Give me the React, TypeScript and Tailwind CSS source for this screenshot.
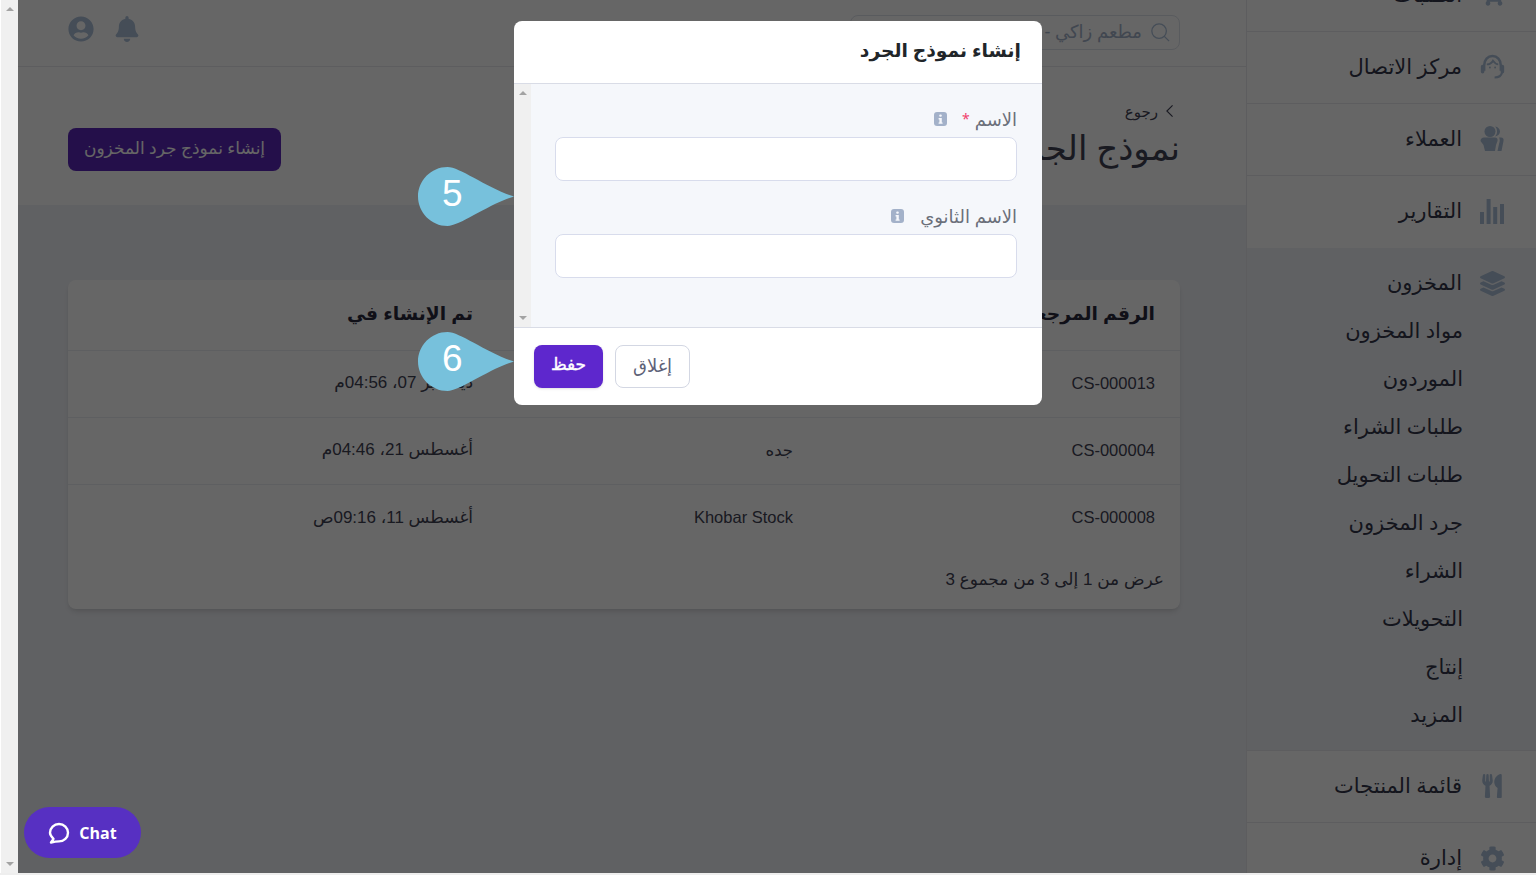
import React from 'react'
import { FaBell, FaCog, FaLayerGroup, FaShoppingCart, FaUserCircle, FaUtensils } from 'react-icons/fa'

const HeadsetIcon = () => (
  <svg viewBox="0 0 24 24" className="w-[25px] h-[25px]" fill="none" stroke="#acc0d9" strokeWidth="2.4">
    <path d="M4 16 V11 C4 5.5 7.5 2 12 2 C16.5 2 20 5.5 20 11 V16" />
    <path d="M6.5 10 C9.5 10 11.5 8.5 12.5 6.5 C14 8.5 15.5 10 17.5 10" strokeWidth="1.8" />
    <path d="M2.5 12 V17 M21.5 12 V17" strokeWidth="3.4" strokeLinecap="round" />
    <path d="M21 18 C20.5 21 18 22.5 14 22.5" strokeWidth="2" />
    <circle cx="9.5" cy="13" r="0.9" fill="#acc0d9" stroke="none" />
    <circle cx="14.5" cy="13" r="0.9" fill="#acc0d9" stroke="none" />
  </svg>
)

const UsersIcon = () => (
  <svg viewBox="0 0 24 25" className="w-[24px] h-[25px]" fill="#acc0d9">
    <circle cx="10" cy="5.5" r="5.5" />
    <path d="M15 0.6 C18 1 20 3 20 5.5 C20 8 18 10 15 10.4 C16.5 9 17 7.5 17 5.5 C17 3.5 16.5 2 15 0.6 Z" />
    <path d="M0.5 15 C0.5 13 2 11.5 4 11.5 H15 C17 11.5 18 13 17.5 15 L16 19 L15 25 H5 L3.5 19 Z" />
    <path d="M19 11.5 H21 C23 11.5 24 13 23.5 15 L21.5 25 H17.5 L19 18 C20 15 20 13 19 11.5 Z" />
  </svg>
)

const BarsIcon = () => (
  <svg viewBox="0 0 24 25" className="w-[24px] h-[25px]" fill="#acc0d9">
    <rect x="0" y="13" width="4" height="12" />
    <rect x="6.6" y="0" width="4" height="25" />
    <rect x="13.2" y="8" width="4" height="17" />
    <rect x="20" y="5" width="4" height="20" />
  </svg>
)

const InfoBadge = () => (
  <span className="inline-flex w-[13px] h-[14px] rounded-[3px] bg-[#a3b1c9] items-center justify-center">
    <svg viewBox="0 0 13 14" className="w-[13px] h-[14px]" fill="#f5f7fb">
      <rect x="5.2" y="2.4" width="2.6" height="2.4" rx="1" />
      <path d="M4.6 6 H7.8 V10.4 H8.6 V11.8 H4.6 V10.4 H5.4 V7.4 H4.6 Z" />
    </svg>
  </span>
)

const Callout = ({ n, className }: { n: string; className: string }) => (
  <div className={`absolute w-[96px] h-[59px] ${className}`}>
    <svg viewBox="0 0 96 60" preserveAspectRatio="none" className="absolute inset-0 w-[96px] h-[59px]" fill="#77c1dc">
      <path d="M29.5 0 C42 0 70 22 96 30 C70 38 42 60 29.5 60 C13 60 0 46 0 30 C0 14 13 0 29.5 0 Z" />
    </svg>
    <span className="absolute left-[24px] top-[5px] text-[37px] leading-[44px] text-white font-['Liberation_Sans',sans-serif]">{n}</span>
  </div>
)

const NavRow = ({ icon, label, border = true }: { icon: React.ReactNode; label: string; border?: boolean }) => (
  <div className={`h-[72px] flex items-center pr-[31px] pb-[2px] ${border ? 'border-b border-[#e8e9ee]' : ''}`}>
    <span className="w-[26px] flex justify-center text-[#acc0d9]">{icon}</span>
    <span className="mr-[17px] text-[21px] text-[#33364a]">{label}</span>
  </div>
)

const stockItems = ['مواد المخزون', 'الموردون', 'طلبات الشراء', 'طلبات التحويل', 'جرد المخزون', 'الشراء', 'التحويلات', 'إنتاج', 'المزيد']

const rows = [
  { ref: 'CS-000013', place: 'جده', date: 'ديسمبر 07، 04:56م' },
  { ref: 'CS-000004', place: 'جده', date: 'أغسطس 21، 04:46م' },
  { ref: 'CS-000008', place: 'Khobar Stock', date: 'أغسطس 11، 09:16ص' },
]

const Scrollbar = ({ className }: { className: string }) => (
  <div className={`flex flex-col justify-between items-center bg-[#f0f0f0] ${className}`}>
    <span className="mt-[7px] w-0 h-0 border-x-[4px] border-x-transparent border-b-[4px] border-b-[#a3a3a3]" />
    <span className="mb-[7px] w-0 h-0 border-x-[4px] border-x-transparent border-t-[4px] border-t-[#a3a3a3]" />
  </div>
)

export default function App() {
  return (
    <div dir="rtl" className="relative w-[1536px] h-[875px] overflow-hidden flex bg-white font-['Noto_Sans','DejaVu_Sans',sans-serif]">
      {/* sidebar */}
      <aside className="w-[290px] shrink-0 bg-white border-l border-[#e8e9ee] overflow-hidden">
        <div className="-mt-[40px]">
          <NavRow icon={<FaShoppingCart size={24} />} label="الطلبات" />
          <NavRow icon={<HeadsetIcon />} label="مركز الاتصال" />
          <NavRow icon={<UsersIcon />} label="العملاء" />
          <NavRow icon={<BarsIcon />} label="التقارير" border={false} />
          <div className="bg-[#f1f3f8] border-b border-[#e8e9ee] pb-[11px]">
            <div className="h-[70px] flex items-center pr-[31px]">
              <span className="w-[26px] flex justify-center text-[#acc0d9]"><FaLayerGroup size={25} /></span>
              <span className="mr-[17px] text-[21px] text-[#33364a]">المخزون</span>
            </div>
            <div className="-mt-[11px]">
              {stockItems.map((item) => (
                <div key={item} className="h-[48px] flex items-center pr-[73px] text-[21px] text-[#33364a]">{item}</div>
              ))}
            </div>
          </div>
          <NavRow icon={<FaUtensils size={24} />} label="قائمة المنتجات" />
          <NavRow icon={<FaCog size={25} />} label="إدارة" border={false} />
        </div>
      </aside>

      {/* main */}
      <main className="flex-1 flex flex-col bg-[#f1f3f8]">
        <header className="h-[67px] bg-white border-b border-[#e8e9ee] flex items-center justify-between pr-[66px] pl-[50px] shrink-0">
          <div className="w-[330px] h-[35px] border border-[#dfe3ec] rounded-[8px] flex items-center pr-[9px] gap-[8px] mb-[2px]">
            <svg viewBox="0 0 22 22" className="w-[20px] h-[20px]" fill="none" stroke="#acc0d9" strokeWidth="1.4">
              <circle cx="10" cy="10" r="8" />
              <path d="M15.5 15.5 L21 21" />
            </svg>
            <span className="text-[18px] text-[#a3b1c9] whitespace-nowrap pb-[2px]">مطعم زاكي - الفرع الرئيسي</span>
          </div>
          <div className="flex items-center gap-[20px] mb-[8px] text-[#acc0d9]">
            <FaBell size={26} />
            <FaUserCircle size={26} />
          </div>
        </header>

        <section className="h-[138px] bg-white flex items-center justify-between pr-[66px] pl-[50px] shrink-0">
          <div className="pb-[4px]">
            <div className="flex items-center gap-[7px] pr-[6px] text-[15px] text-[#3f4254] leading-[20px] mt-[2px]">
              <svg viewBox="0 0 10 16" className="w-[9px] h-[14px]" fill="none" stroke="#3f4254" strokeWidth="1.3">
                <path d="M8.5 1.5 L2 8 L8.5 14.5" />
              </svg>
              رجوع
            </div>
            <h1 className="text-[34px] leading-[44px] text-[#3f4254] mt-[4px]">نموذج الجرد</h1>
          </div>
          <button className="w-[213px] h-[43px] mt-[26px] rounded-[8px] bg-[#5b27b8] text-white text-[17px] pb-[2px]">إنشاء نموذج جرد المخزون</button>
        </section>

        <div className="mx-[50px] mr-[66px] mt-[75px] h-[329px] bg-white rounded-[8px] shadow-md font-['Liberation_Sans','DejaVu_Sans',sans-serif] text-[16.5px] text-[#3f4254]">
          <div className="h-[71px] grid grid-cols-[362px_320px_1fr] pr-[25px] pb-[2px] items-center border-b border-[#ebedf3] font-bold text-[18.7px] text-[#2a2a3c]">
            <span>الرقم المرجعي</span>
            <span>الفرع</span>
            <span>تم الإنشاء في</span>
          </div>
          {rows.map((row, i) => (
            <div key={row.ref} className={`h-[67px] grid grid-cols-[362px_320px_1fr] pr-[25px] pb-[2px] items-center ${i < rows.length - 1 ? 'border-b border-[#ebedf3]' : ''}`}>
              <span dir="ltr" className="text-right">{row.ref}</span>
              <span>{row.place}</span>
              <span className="text-[17px]">{row.date}</span>
            </div>
          ))}
          <div className="pr-[16px] mt-[16px] leading-[24px] text-[17px]">عرض من 1 إلى 3 من مجموع 3</div>
        </div>
      </main>

      <Scrollbar className="w-[18px] shrink-0 border-l border-white pb-[2px]" />

      {/* dark backdrop */}
      <div className="absolute top-0 bottom-0 right-0 left-[18px] bg-black/60" />
      <div className="absolute bottom-0 left-0 right-0 h-[2px] bg-[#eeeeee]" />

      {/* modal */}
      <div className="absolute left-[514px] top-[21px] w-[528px] h-[384px] bg-white rounded-[8px] flex flex-col overflow-hidden">
        <div className="h-[63px] shrink-0 border-b border-[#d9dce6] flex items-center pr-[21px] text-[18.7px] font-semibold text-[#212529] pb-[4px]">إنشاء نموذج الجرد</div>
        <div className="flex-1 flex bg-[#f5f7fb]">
          <div className="flex-1 pr-[25px] pl-[8px] pt-[22px]">
            <div className="h-[97px] w-[462px]">
              <div className="flex items-center h-[26px] text-[18px] text-[#6b6f7a] leading-[26px]">
                الاسم<span className="text-[#f1416c] mr-[5px] text-[14px]">*</span>
                <span className="mr-[15px] flex"><InfoBadge /></span>
              </div>
              <input className="block mt-[5px] w-full h-[44px] bg-white border border-[#d8dcec] rounded-[8px]" />
            </div>
            <div className="h-[97px] w-[462px]">
              <div className="flex items-center h-[26px] text-[18px] text-[#6b6f7a] leading-[26px]">
                الاسم الثانوي
                <span className="mr-[16px] flex"><InfoBadge /></span>
              </div>
              <input className="block mt-[5px] w-full h-[44px] bg-white border border-[#d8dcec] rounded-[8px]" />
            </div>
          </div>
          <Scrollbar className="w-[17px] shrink-0" />
        </div>
        <div className="h-[78px] shrink-0 border-t border-[#d9dce6] flex items-start justify-end gap-[12px] pt-[17px] pl-[20px]">
          <button className="w-[75px] h-[43px] rounded-[8px] bg-white border border-[#d3d7e3] text-[18px] text-[#5e6278] pb-[3px]">إغلاق</button>
          <button className="w-[69px] h-[43px] rounded-[8px] bg-[#5e27cd] text-white text-[17px] [-webkit-text-stroke:0.4px_white] shadow-sm pb-[5px]">حفظ</button>
        </div>
      </div>

      <Callout n="5" className="left-[418px] top-[167px]" />
      <Callout n="6" className="left-[418px] top-[332px]" />

      {/* chat launcher */}
      <button dir="ltr" className="absolute left-[24px] top-[807px] w-[117px] h-[51px] rounded-full bg-[#5730c2] flex items-center justify-center gap-[9px] text-white font-bold text-[16px] font-['Open_Sans',sans-serif]">
        <svg viewBox="0 0 22 22" className="w-[22px] h-[22px]" fill="none" stroke="white" strokeWidth="2.4">
          <path d="M3 20.5 L5.5 16.8 C3.8 15.2 2 13.4 2 10.8 C2 6 6 2 11 2 C16 2 20 6 20 10.8 C20 15.6 16 19.4 11 19.4 C8.5 19.4 6 19.8 3 20.5 Z" strokeLinejoin="round" />
        </svg>
        Chat
      </button>
    </div>
  )
}
